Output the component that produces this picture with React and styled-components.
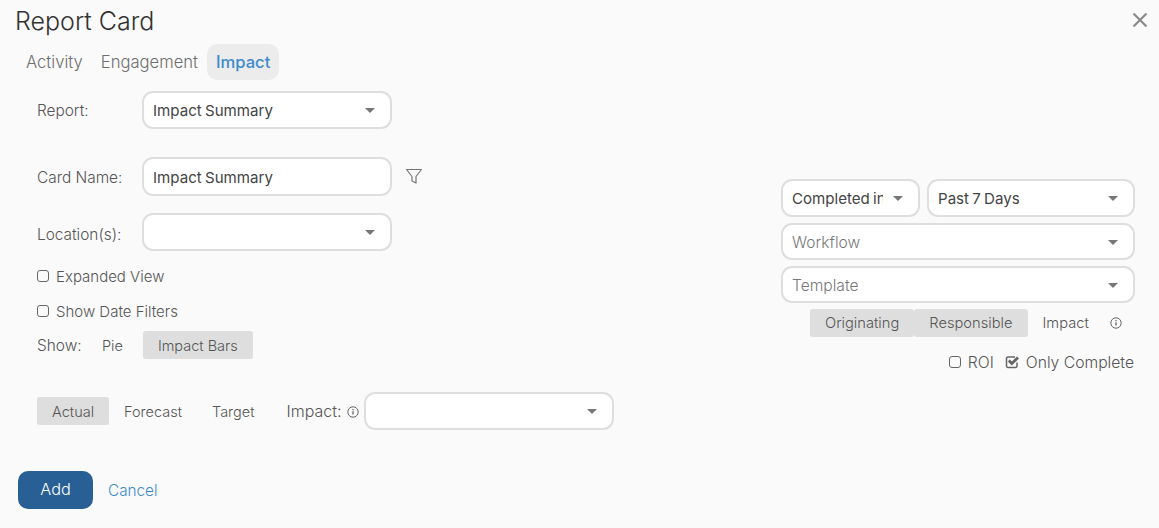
import React from "react";
import styled, { createGlobalStyle } from "styled-components";

const GlobalStyle = createGlobalStyle`
  html, body {
    margin: 0;
    padding: 0;
    background: #fafafa;
  }
  body {
    font-family: "Inter", "Noto Sans", sans-serif;
    color: #555;
    overflow: hidden;
  }
`;

const Page = styled.div`
  position: relative;
  box-sizing: border-box;
  width: 1159px;
  height: 528px;
  padding: 8px 0 0 15px;
  background: #fafafa;
`;

const Title = styled.h1`
  margin: 0;
  height: 36px;
  line-height: 26px;
  font-size: 25px;
  font-weight: 300;
  color: #333;
`;

const Close = styled.button`
  position: absolute;
  top: 11px;
  right: 10px;
  width: 18px;
  height: 18px;
  padding: 0;
  border: 0;
  background: none;
  color: #8a8a8a;
`;

const Tabs = styled.div`
  display: flex;
  height: 36px;
  padding-left: 2px;
`;

const Tab = styled.div`
  display: flex;
  align-items: center;
  padding: 0 9px;
  border-radius: 10px;
  font-size: 16.6px;
  color: ${(p) => (p.$active ? "#3d8bcb" : "#6e6e6e")};
  font-weight: ${(p) => (p.$active ? 500 : 300)};
  background: ${(p) => (p.$active ? "#ececec" : "transparent")};
`;

const Body = styled.div`
  display: flex;
  justify-content: space-between;
  padding-right: 24px;
`;

const LeftCol = styled.div`
  display: flex;
  flex-direction: column;
  padding: 11px 0 0 3px;
`;

const FormRow = styled.div`
  display: flex;
  align-items: center;
  height: ${(p) => p.$height || 38}px;
  padding-left: 19px;
  margin-bottom: ${(p) => p.$mb || 0}px;
`;

const Label = styled.label`
  box-sizing: border-box;
  width: 105px;
  padding-top: ${(p) => p.$pt || 0}px;
  font-size: 15.4px;
  font-weight: 300;
  color: #555;
`;

const Field = styled.div`
  box-sizing: border-box;
  display: flex;
  align-items: center;
  flex: none;
  width: ${(p) => (p.$width ? `${p.$width}px` : "auto")};
  height: ${(p) => p.$height || 38}px;
  padding: ${(p) => (p.$placeholder || p.$nudge ? 2 : 0)}px 15px 0 9px;
  border: 2px solid #dedede;
  border-radius: 11px;
  background: #fff;
  font-size: ${(p) => (p.$placeholder ? 15.6 : 15.1)}px;
  font-weight: ${(p) => (p.$placeholder ? 300 : 400)};
  word-spacing: -1px;
  color: ${(p) => (p.$placeholder ? "#777" : "#444")};
`;

const FieldText = styled.span`
  flex: 1;
  overflow: hidden;
  white-space: nowrap;
`;

const Caret = styled.span`
  flex: none;
  width: 0;
  height: 0;
  margin-left: 10px;
  border-left: 5.5px solid transparent;
  border-right: 5.5px solid transparent;
  border-top: 5px solid #777;
`;

const FilterIcon = styled.svg`
  width: 18px;
  height: 18px;
  margin: 0 0 2px 13px;
  color: #777;
`;

const CheckRow = styled.div`
  display: flex;
  align-items: center;
  gap: 7px;
  height: 20px;
  padding-left: 19px;
  margin-bottom: ${(p) => p.$mb || 0}px;
  font-size: 15px;
  font-weight: 300;
  color: #555;
`;

const Box = styled.span`
  box-sizing: border-box;
  display: inline-block;
  flex: none;
  width: 12px;
  height: 12px;
  border: 1.5px solid #666;
  border-radius: 3px;
`;

const ShowRow = styled.div`
  display: flex;
  align-items: center;
  height: 28px;
  padding-left: 19px;
`;

const ShowLabel = styled.span`
  width: 50px;
  font-size: 15.4px;
  color: #555;
  font-weight: 300;
`;

const Toggle = styled.div`
  display: flex;
  align-items: center;
  justify-content: center;
  height: 28px;
  padding: 0 15px;
  margin-right: ${(p) => p.$mr || 0}px;
  border-radius: 3px;
  font-size: ${(p) => p.$size || 14.5}px;
  font-weight: 300;
  color: #555;
  background: ${(p) => (p.$on ? "#dedede" : "transparent")};
`;

const ImpactRow = styled.div`
  display: flex;
  align-items: center;
  height: 38px;
  margin: 33px 0 41px;
  padding-left: 19px;
`;

const ImpactLabel = styled.span`
  margin-left: 17px;
  font-size: 16px;
  font-weight: 300;
  color: #555;
`;

const Info = styled.svg`
  flex: none;
  width: 12px;
  height: 12px;
  margin: ${(p) => p.$margin || "0"};
  color: #666;
`;

const Actions = styled.div`
  display: flex;
  align-items: center;
  gap: 15px;
`;

const AddButton = styled.button`
  width: 75px;
  height: 38px;
  padding: 0 0 2px;
  border: 0;
  border-radius: 10px;
  background: #286096;
  color: #fff;
  font: 300 16.3px "Inter", sans-serif;
`;

const CancelLink = styled.a`
  font-size: 15.3px;
  font-weight: 300;
  color: #3d8bcb;
`;

const RightCol = styled.div`
  display: flex;
  flex-direction: column;
  gap: 6px;
  width: 354px;
  padding-top: 99px;
`;

const FilterPair = styled.div`
  display: flex;
  gap: 7px;
`;

const ToggleRow = styled.div`
  display: flex;
  align-items: center;
  padding-left: 29px;
`;

const OptionsRow = styled.div`
  display: flex;
  justify-content: flex-end;
  align-items: center;
  height: 20px;
  margin: 9px 1px 0 0;
  font-size: 15.7px;
  font-weight: 300;
  color: #555;
`;

const Option = styled.span`
  display: flex;
  align-items: center;
  gap: 7px;
  margin-left: 11px;
`;

const CheckedBox = styled.svg`
  width: 14px;
  height: 14px;
  color: #666;
`;

const InfoIcon = ({ margin }) => (
  <Info $margin={margin} viewBox="0 0 12 12" fill="none" stroke="currentColor">
    <circle cx="6" cy="6" r="5.2" strokeWidth="1" />
    <path d="M6 5.2v3.4" strokeWidth="1.3" />
    <path d="M6 3v1.2" strokeWidth="1.3" />
  </Info>
);

const Select = ({ value, placeholder, width, height }) => (
  <Field $width={width} $height={height} $placeholder={!!placeholder}>
    <FieldText>{value || placeholder}</FieldText>
    <Caret />
  </Field>
);

export default function App() {
  return (
    <Page>
      <GlobalStyle />
      <Title>Report Card</Title>
      <Close aria-label="Close">
        <svg width="18" height="18" viewBox="0 0 18 18" fill="none" stroke="currentColor" strokeWidth="2.2">
          <path d="M2.5 2.5l13 13M15.5 2.5l-13 13" />
        </svg>
      </Close>
      <Tabs>
        <Tab>Activity</Tab>
        <Tab>Engagement</Tab>
        <Tab $active>Impact</Tab>
      </Tabs>
      <Body>
        <LeftCol>
          <FormRow $mb={28}>
            <Label>Report:</Label>
            <Select value="Impact Summary" width={249.5} />
          </FormRow>
          <FormRow $height={39} $mb={17}>
            <Label $pt={1}>Card Name:</Label>
            <Field $width={249.5} $height={39} $nudge>
              <FieldText>Impact Summary</FieldText>
            </Field>
            <FilterIcon viewBox="0 0 18 18" fill="none" stroke="currentColor" strokeWidth="1.2">
              <path d="M1.5 2.5h15L11 9.5v6.5l-4-2V9.5z" strokeLinejoin="round" />
            </FilterIcon>
          </FormRow>
          <FormRow $mb={15}>
            <Label $pt={5}>Location(s):</Label>
            <Select width={249.5} />
          </FormRow>
          <CheckRow $mb={15}>
            <Box />
            Expanded View
          </CheckRow>
          <CheckRow $mb={10}>
            <Box />
            Show Date Filters
          </CheckRow>
          <ShowRow>
            <ShowLabel>Show:</ShowLabel>
            <Toggle $mr={5}>Pie</Toggle>
            <Toggle $on>Impact Bars</Toggle>
          </ShowRow>
          <ImpactRow>
            <Toggle $on>Actual</Toggle>
            <Toggle>Forecast</Toggle>
            <Toggle>Target</Toggle>
            <ImpactLabel>Impact:</ImpactLabel>
            <InfoIcon margin="1px 5px 0 5px" />
            <Select width={250} />
          </ImpactRow>
          <Actions>
            <AddButton>Add</AddButton>
            <CancelLink>Cancel</CancelLink>
          </Actions>
        </LeftCol>
        <RightCol>
          <FilterPair>
            <Select value="Completed in Period" width={139} />
            <Select value="Past 7 Days" width={208} />
          </FilterPair>
          <Select placeholder="Workflow" height={37} />
          <Select placeholder="Template" height={37} />
          <ToggleRow>
            <Toggle $on $size={14.7}>Originating</Toggle>
            <Toggle $on $size={14.7}>Responsible</Toggle>
            <Toggle $size={14.7}>Impact</Toggle>
            <InfoIcon margin="0 0 0 6px" />
          </ToggleRow>
          <OptionsRow>
            <Option>
              <Box />
              ROI
            </Option>
            <Option>
              <CheckedBox viewBox="0 0 14 14" fill="none" stroke="currentColor">
                <path d="M12 7.5v3.5a1.5 1.5 0 0 1-1.5 1.5H3A1.5 1.5 0 0 1 1.5 11V3.5A1.5 1.5 0 0 1 3 2h7" strokeWidth="1.5" />
                <path d="M3.8 5.6l3 3L13 2.4" strokeWidth="2.8" />
              </CheckedBox>
              Only Complete
            </Option>
          </OptionsRow>
        </RightCol>
      </Body>
    </Page>
  );
}
